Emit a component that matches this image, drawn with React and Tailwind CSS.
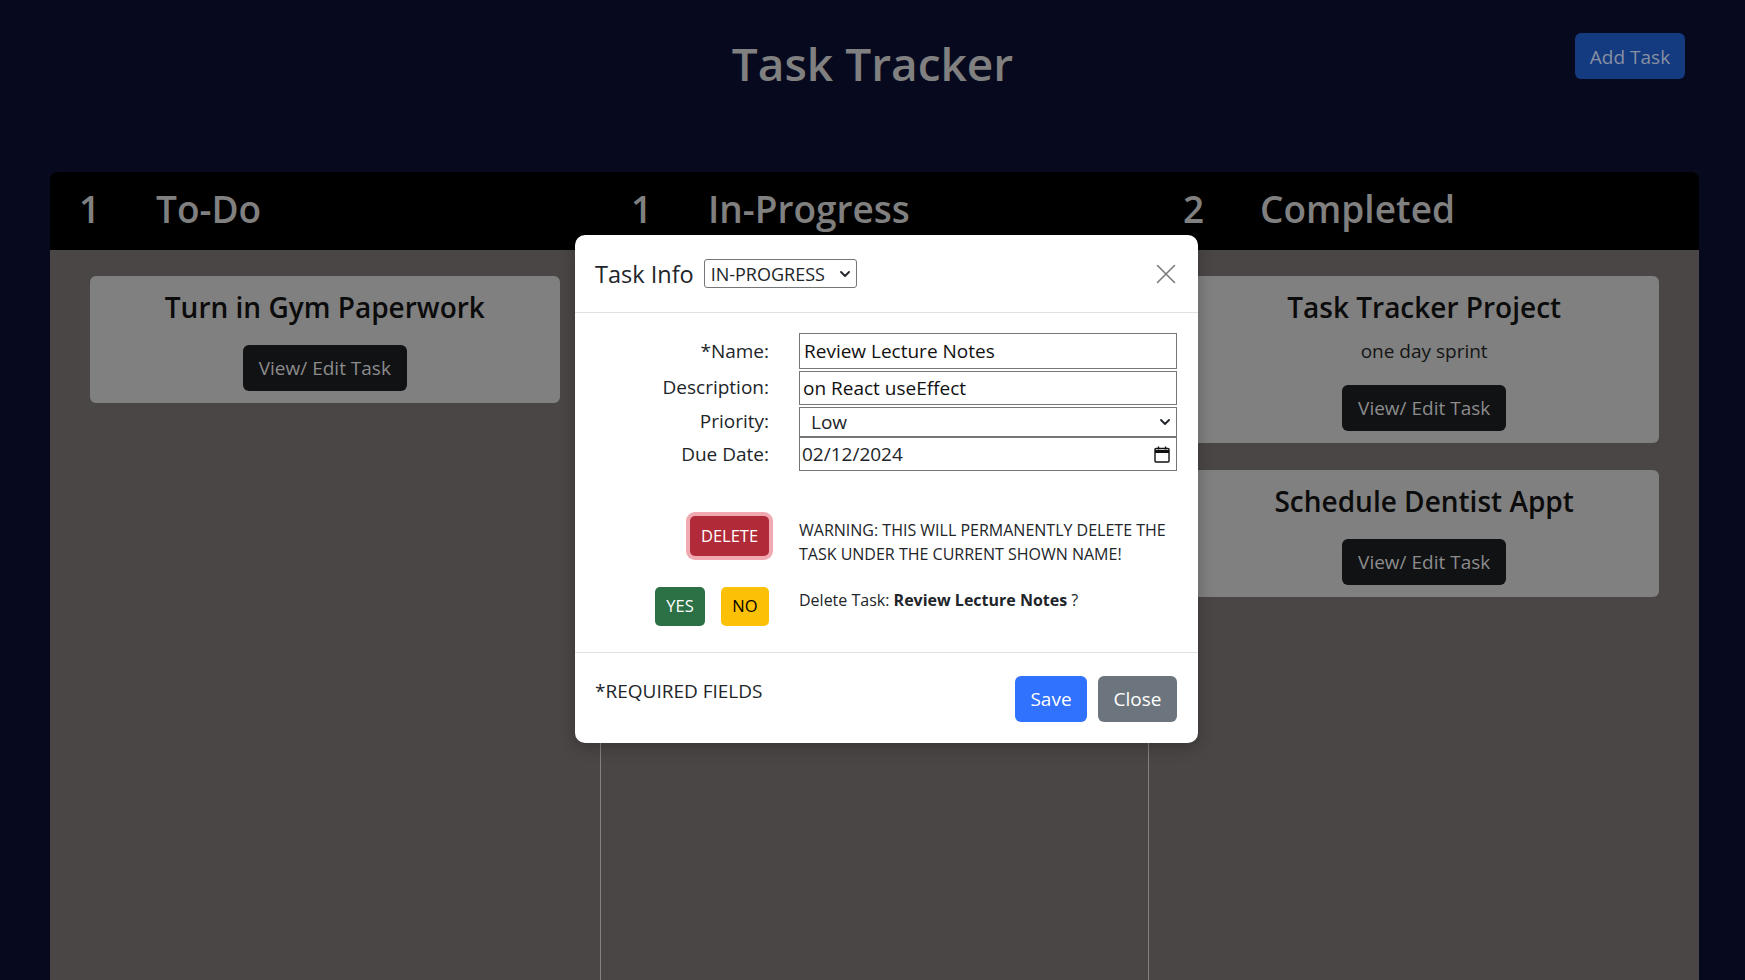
import React from 'react'

const columns = [
  { count: 1, title: 'To-Do', tasks: [{ name: 'Turn in Gym Paperwork' }] },
  { count: 1, title: 'In-Progress', tasks: [{ name: 'Review Lecture Notes', desc: 'on React useEffect' }] },
  {
    count: 2,
    title: 'Completed',
    tasks: [
      { name: 'Task Tracker Project', desc: 'one day sprint' },
      { name: 'Schedule Dentist Appt' },
    ],
  },
]

function Chevron({ className }) {
  return (
    <svg className={className} viewBox="0 0 10 6" fill="none" stroke="currentColor" strokeWidth={1.8} strokeLinecap="round" strokeLinejoin="round">
      <path d="M1 1l4 4 4-4" />
    </svg>
  )
}

function TaskCard({ task }) {
  return (
    <div className="rounded-[6px] bg-[#808080] px-4 pt-[13px] pb-[12px] flex flex-col items-center">
      <h4 className="text-[28px] leading-[37px] font-semibold text-[#0b0b0b]">{task.name}</h4>
      {task.desc && <p className="mt-[10px] text-[19px] leading-[30px] text-[#141414]">{task.desc}</p>}
      <button className="mt-[19px] h-[46px] px-[16px] rounded-[6px] bg-[#111214] text-[19px] text-[#8c8c8c]">
        View/ Edit Task
      </button>
    </div>
  )
}

function Field({ label, children }) {
  return (
    <>
      <label className="self-center text-right text-[19px] leading-[28px] text-[#212529]">{label}</label>
      {children}
    </>
  )
}

function TaskModal() {
  return (
    <div className="absolute left-[575px] top-[235px] w-[623px] rounded-[10px] bg-white shadow-[0_4px_16px_rgba(0,0,0,0.25)] text-[#212529]">
      {/* header */}
      <div className="flex h-[78px] items-center border-b border-[#dee2e6] pl-[20px] pr-[21px]">
        <h5 className="text-[23.5px] font-medium leading-[30px]">Task Info</h5>
        <div className="ml-[10px] flex h-[29px] w-[153px] items-center justify-between rounded-[3px] border border-[#767676] pl-[6px] pr-[6px]">
          <span className="text-[18px] leading-none">IN-PROGRESS</span>
          <Chevron className="h-[6px] w-[10px]" />
        </div>
        <button className="ml-auto flex h-[24px] w-[22px] items-center justify-center text-[#7a7a7a]">
          <svg viewBox="0 0 20 20" className="h-[20px] w-[20px]" stroke="currentColor" strokeWidth={1.6} strokeLinecap="round">
            <path d="M1.5 1.5l17 17M18.5 1.5l-17 17" />
          </svg>
        </button>
      </div>

      {/* body */}
      <div className="px-[20px] pt-[20px] pb-[26px]">
        <div className="grid grid-cols-[174px_378px] gap-x-[30px]">
          <Field label="*Name:">
            <input
              readOnly
              value="Review Lecture Notes"
              className="h-[36px] w-full border border-[#767676] px-[4px] text-[19px] text-[#111] outline-none"
            />
          </Field>
          <Field label="Description:">
            <input
              readOnly
              value="on React useEffect"
              className="mt-[2px] h-[34px] w-full border border-[#767676] px-[3px] text-[19px] text-[#111] outline-none"
            />
          </Field>
          <Field label="Priority:">
            <div className="mt-[2px] flex h-[30px] items-center justify-between border border-[#767676] pl-[11px] pr-[6px]">
              <span className="text-[19px] leading-none">Low</span>
              <Chevron className="h-[6px] w-[10px]" />
            </div>
          </Field>
          <Field label="Due Date:">
            <div className="flex h-[34px] items-center justify-between border border-[#767676] pl-[2px] pr-[6px]">
              <span className="text-[19px] leading-none">02/12/2024</span>
              <svg viewBox="0 0 16 17" className="h-[17px] w-[16px]" fill="none" stroke="#111" strokeWidth={1.4}>
                <rect x="1" y="2.5" width="14" height="13.5" rx="1" />
                <path d="M1 5.5h14" strokeWidth={3} />
                <path d="M4.5 0.5v3M11.5 0.5v3" />
              </svg>
            </div>
          </Field>
        </div>

        <div className="mt-[45px] grid grid-cols-[174px_378px] gap-x-[30px] gap-y-[21px]">
          <div className="flex items-start justify-end">
            <button className="h-[40px] w-[79px] rounded-[5px] bg-[#b02a37] text-[16.5px] text-white shadow-[0_0_0_4px_#f0a9b0]">
              DELETE
            </button>
          </div>
          <p className="mt-[2px] text-[16px] leading-[24px]">
            WARNING: THIS WILL PERMANENTLY DELETE THE TASK UNDER THE CURRENT SHOWN NAME!
          </p>
          <div className="flex justify-end gap-[16px]">
            <button className="h-[39px] w-[50px] rounded-[5px] bg-[#2c7045] text-[16.5px] text-white">YES</button>
            <button className="h-[39px] w-[48px] rounded-[5px] bg-[#fcc107] text-[16.5px] text-black">NO</button>
          </div>
          <p className="mt-[1px] text-[16px] leading-[24px]">
            Delete Task: <b className="font-bold">Review Lecture Notes</b> ?
          </p>
        </div>
      </div>

      {/* footer */}
      <div className="flex items-start justify-between border-t border-[#dee2e6] pl-[20px] pr-[21px] pt-[23px] pb-[21px]">
        <p className="text-[19px] leading-[30px]">*REQUIRED FIELDS</p>
        <div className="flex gap-[11px]">
          <button className="h-[46px] w-[72px] rounded-[6px] bg-[#3071fd] text-[19px] text-white">Save</button>
          <button className="h-[46px] w-[79px] rounded-[6px] bg-[#6c757d] text-[19px] text-white">Close</button>
        </div>
      </div>
    </div>
  )
}

export default function App() {
  return (
    <div className="relative h-[980px] overflow-hidden bg-[#070a1e] font-['Open_Sans',sans-serif]">
      <header className="grid h-[172px] grid-cols-[1fr_auto_1fr]">
        <div />
        <h1 className="pt-[34px] text-[46px] font-semibold leading-[58px] text-[#808080]">Task Tracker</h1>
        <div className="flex justify-end">
          <button className="mt-[33px] mr-[60px] h-[46px] w-[110px] rounded-[6px] bg-[#143a80] pt-[2px] text-[19px] text-[#8890a2]">
            Add Task
          </button>
        </div>
      </header>

      <div className="ml-[50px] mr-[46px] overflow-hidden rounded-t-[8px]">
        <div className="grid h-[78px] grid-cols-[552px_552px_1fr] bg-black pb-[4px]">
          {columns.map(col => (
            <div key={col.title} className="flex items-center pl-[29px] text-[37px] font-semibold text-[#808080]">
              <span className="w-[77px]">{col.count}</span>
              <span>{col.title}</span>
            </div>
          ))}
        </div>
        <div className="grid h-[730px] grid-cols-3 bg-[#4a4645]">
          {columns.map((col, i) => (
            <div
              key={col.title}
              className={`flex flex-col gap-[27px] px-[40px] pt-[26px] ${i === 1 ? 'border-x border-[#858180]' : ''}`}
            >
              {col.tasks.map(t => (
                <TaskCard key={t.name} task={t} />
              ))}
            </div>
          ))}
        </div>
      </div>

      <TaskModal />
    </div>
  )
}
